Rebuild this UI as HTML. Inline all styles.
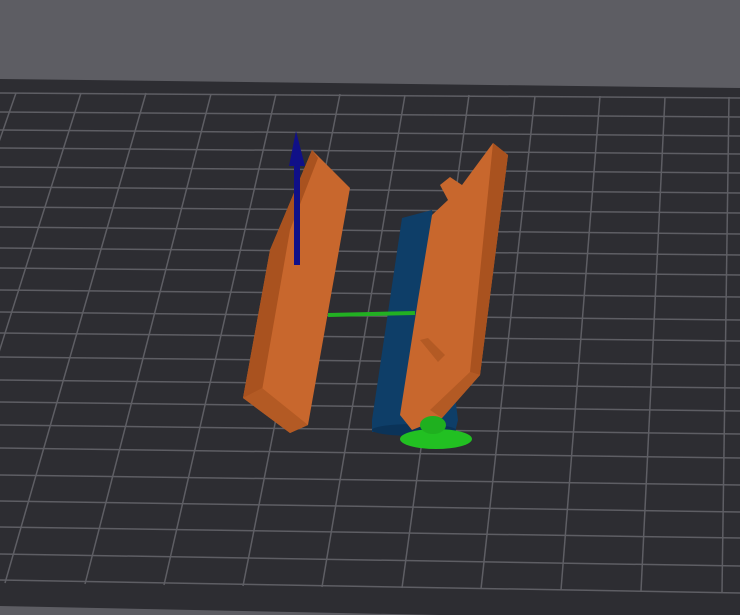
<!DOCTYPE html>
<html><head><style>html,body{margin:0;padding:0;width:740px;height:615px;overflow:hidden;background:#5d5d63}</style></head>
<body>
<svg width="740" height="615" viewBox="0 0 740 615" xmlns="http://www.w3.org/2000/svg">
<rect width="740" height="615" fill="#5d5d63"/>
<polygon points="0,79 740,88 740,615 440,615 0,606" fill="#2d2d32"/>
<g stroke="#5e5e64" stroke-width="1.5" fill="none">
<line x1="0" y1="93" x2="740" y2="98"/>
<line x1="0" y1="112" x2="740" y2="117"/>
<line x1="0" y1="130" x2="740" y2="136"/>
<line x1="0" y1="148" x2="740" y2="154"/>
<line x1="0" y1="167" x2="740" y2="173"/>
<line x1="0" y1="187" x2="740" y2="193"/>
<line x1="0" y1="207" x2="740" y2="213"/>
<line x1="0" y1="227" x2="740" y2="234"/>
<line x1="0" y1="248" x2="740" y2="255"/>
<line x1="0" y1="268" x2="740" y2="275"/>
<line x1="0" y1="290" x2="740" y2="297"/>
<line x1="0" y1="312" x2="740" y2="320"/>
<line x1="0" y1="333" x2="740" y2="341"/>
<line x1="0" y1="357" x2="740" y2="365"/>
<line x1="0" y1="380" x2="740" y2="388"/>
<line x1="0" y1="402" x2="740" y2="411"/>
<line x1="0" y1="425" x2="740" y2="434"/>
<line x1="0" y1="448" x2="740" y2="458"/>
<line x1="0" y1="475" x2="740" y2="485"/>
<line x1="0" y1="501" x2="740" y2="512"/>
<line x1="0" y1="527" x2="740" y2="538"/>
<line x1="0" y1="554" x2="740" y2="566"/>
<line x1="0" y1="580" x2="740" y2="593"/>
</g>
<g stroke="#5e5e64" stroke-width="1.5" fill="none">
<line x1="16" y1="93" x2="-154" y2="582"/>
<line x1="81" y1="93" x2="-74" y2="583"/>
<line x1="146" y1="93" x2="5" y2="583"/>
<line x1="211" y1="94" x2="85" y2="584"/>
<line x1="276" y1="94" x2="164" y2="585"/>
<line x1="340" y1="94" x2="243" y2="586"/>
<line x1="405" y1="95" x2="322" y2="587"/>
<line x1="469" y1="95" x2="402" y2="588"/>
<line x1="535" y1="96" x2="481" y2="589"/>
<line x1="600" y1="96" x2="561" y2="590"/>
<line x1="665" y1="97" x2="641" y2="591"/>
<line x1="729" y1="97" x2="722" y2="592"/>
</g>
<!-- blue cylinder -->
<polygon points="402,218 432,210 458,420 455,432 372,432 372,420" fill="#0e3e68"/>
<ellipse cx="414" cy="430" rx="42" ry="6" fill="#0b3358"/>
<!-- left slab -->
<polygon points="312,150 350,188 308,425 290,433 243,398 270,250" fill="#c8672d"/>
<polygon points="312,150 270,250 243,398 260,402 290,230 318,158" fill="#a9521f"/>
<polygon points="243,398 290,433 308,425 262,388" fill="#b35a24"/>
<!-- blue arrow -->
<line x1="297" y1="265" x2="297" y2="160" stroke="#101088" stroke-width="6"/>
<polygon points="289,166 296,131 305,166" fill="#101088"/>
<!-- green line -->
<line x1="328" y1="315" x2="415" y2="313" stroke="#22b022" stroke-width="4"/>
<!-- right slab -->
<polygon points="493,143 508,155 480,375 442,418 412,430 400,415 418,300 432,215 448,200 440,185 450,177 462,185" fill="#c8672d"/>
<polygon points="493,143 508,155 480,375 470,372" fill="#a9521f"/>
<polygon points="470,372 480,375 442,418 430,410" fill="#b35a24"/>
<polygon points="420,340 428,338 445,355 438,362" fill="#b35a24"/>
<!-- green support -->
<ellipse cx="436" cy="439" rx="36" ry="10" fill="#22c022"/>
<ellipse cx="433" cy="425" rx="13" ry="9" fill="#1fb01f"/>
</svg>
</body></html>
